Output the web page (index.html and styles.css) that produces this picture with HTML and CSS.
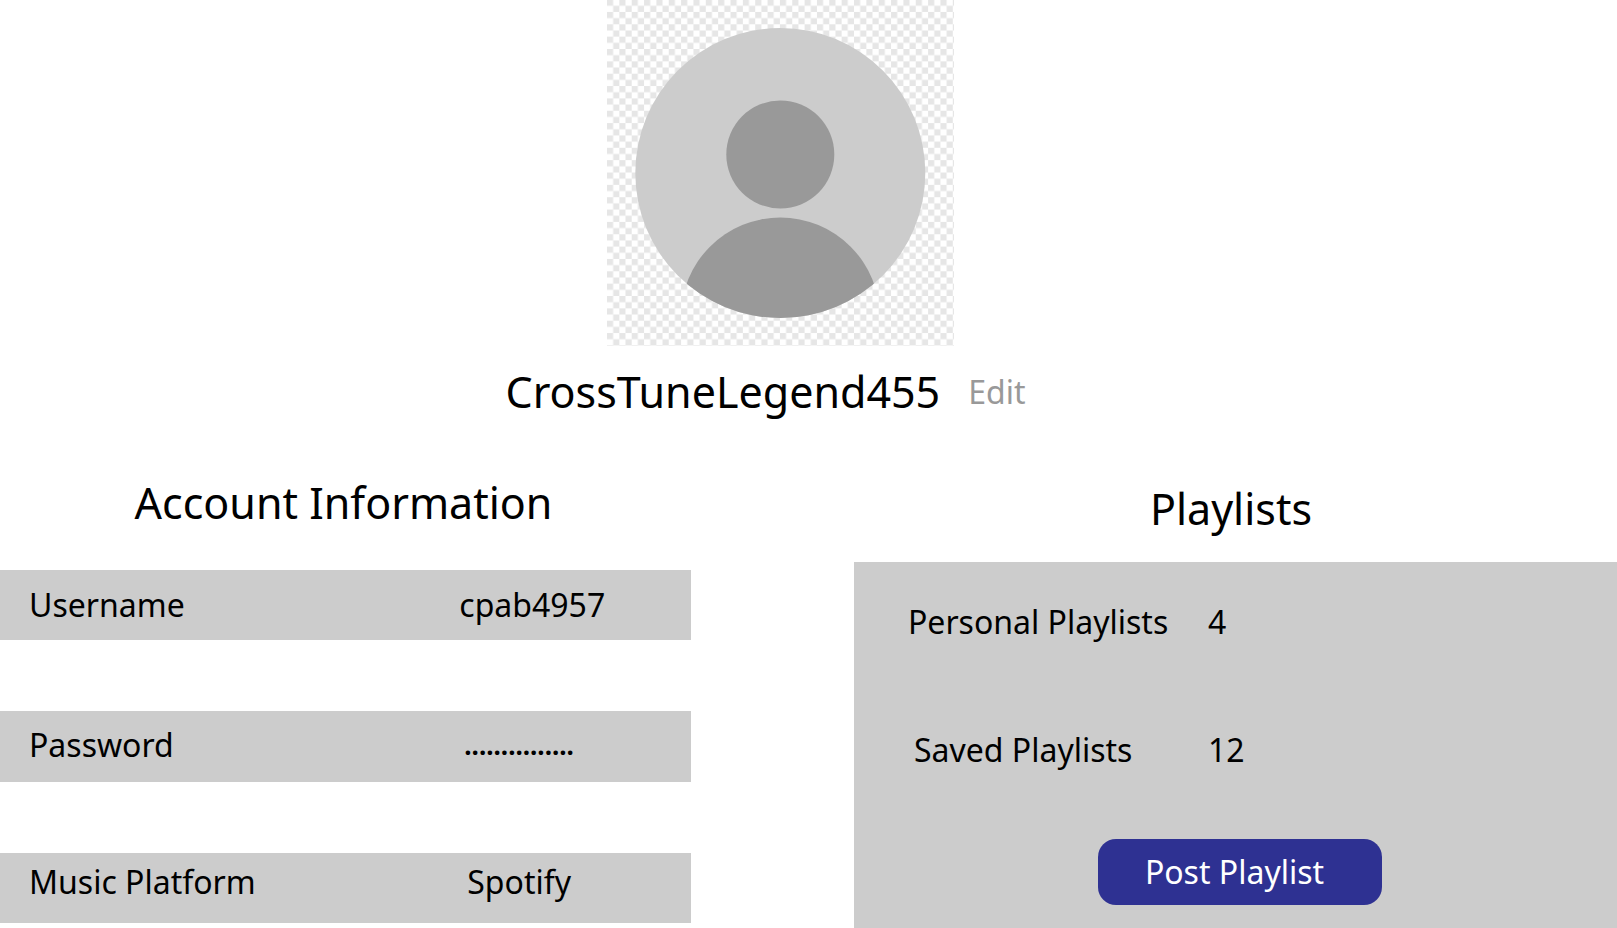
FILE: index.html
```html
<!DOCTYPE html>
<html lang="en">
<head>
<meta charset="utf-8">
<title>CrossTune Profile</title>
<link rel="stylesheet" href="styles.css">
</head>
<body>
<header class="profile">
  <svg class="avatar" viewBox="0 0 347 347" role="img" aria-label="Profile picture">
    <defs>
      <pattern id="checker" width="12.35" height="12.35" y="-0.4" patternUnits="userSpaceOnUse">
        <path d="M0 0h6.17v6.17H0zM6.17 6.17h6.18v6.18H6.17z" fill="#e6e6e6"/>
      </pattern>
      <clipPath id="disc"><circle cx="173.3" cy="173" r="145"/></clipPath>
    </defs>
    <rect width="347" height="346" fill="url(#checker)"/>
    <circle cx="173.3" cy="173" r="145" fill="#ccc"/>
    <g clip-path="url(#disc)" fill="#999">
      <circle cx="173.3" cy="154.5" r="54"/>
      <circle cx="173.3" cy="317" r="99.5"/>
    </g>
  </svg>
  <div class="identity">
    <h1 class="title">CrossTuneLegend455</h1>
    <button class="edit" type="button">Edit</button>
  </div>
</header>
<main class="columns">
  <section class="account">
    <h2 class="title account-title">Account Information</h2>
    <dl class="fields">
      <div class="field"><dt>Username</dt><dd>cpab4957</dd></div>
      <div class="field field-password"><dt>Password</dt><dd class="masked">...............</dd></div>
      <div class="field field-platform"><dt>Music Platform</dt><dd>Spotify</dd></div>
    </dl>
  </section>
  <section class="playlists">
    <h2 class="title playlists-title">Playlists</h2>
    <div class="panel">
      <dl class="counts">
        <div class="count"><dt>Personal Playlists</dt><dd>4</dd></div>
        <div class="count"><dt class="saved">Saved Playlists</dt><dd>12</dd></div>
      </dl>
      <button class="post" type="button">Post Playlist</button>
    </div>
  </section>
</main>
</body>
</html>
```
FILE: styles.css
```css
* { box-sizing: border-box; }

body {
  margin: 0;
  min-height: 100vh;
  display: flex;
  flex-direction: column;
  background: #fff;
  color: #000;
  font-family: "Noto Sans", "Open Sans", sans-serif;
  font-size: 32px;
  line-height: 48px;
}

h1, h2, dl, dd { margin: 0; }

button {
  font: inherit;
  border: 0;
  cursor: pointer;
}

.title {
  font-size: 43px;
  font-weight: 400;
  line-height: 60px;
}

.profile {
  display: flex;
  flex-direction: column;
  align-items: center;
}

.avatar {
  display: block;
  width: 347px;
  margin-right: 56px;
}

.identity {
  display: flex;
  align-items: center;
  gap: 28px;
  margin: 15px 86px 0 0;
}

.edit {
  padding: 0;
  background: none;
  color: #999;
}

.columns {
  flex: 1;
  display: grid;
  grid-template-columns: 691fr 763fr;
  column-gap: 163px;
}

.account-title {
  margin: 51px 4px 37px 0;
  text-align: center;
}

.fields {
  display: grid;
  gap: 71px;
}

.field {
  display: grid;
  grid-template-columns: 65% 1fr;
  padding: 11px 0 11px 29px;
  background: #ccc;
}

.field-password {
  padding-top: 10px;
  padding-bottom: 13px;
}

.field-platform {
  padding-top: 5px;
  padding-bottom: 17px;
}

.field-password dd,
.field-platform dd { padding-left: 8px; }

.field-password .masked {
  padding-left: 5px;
  font-size: 26px;
  font-weight: 700;
}

.playlists {
  display: flex;
  flex-direction: column;
}

.playlists-title {
  margin: 57px 9px 23px 0;
  text-align: center;
}

.panel {
  flex: 1;
  display: flex;
  flex-direction: column;
  align-items: center;
  padding: 36px 0 22px;
  background: #ccc;
}

.counts {
  display: grid;
  gap: 80px;
  width: 100%;
}

.count {
  display: grid;
  grid-template-columns: 300px 1fr;
  padding-left: 54px;
}

.saved { padding-left: 6px; }

.post {
  width: 284px;
  margin: 65px 0 0 8px;
  padding: 9px 10px 9px 0;
  border-radius: 18px;
  background: #2e3192;
  color: #fff;
}
```
